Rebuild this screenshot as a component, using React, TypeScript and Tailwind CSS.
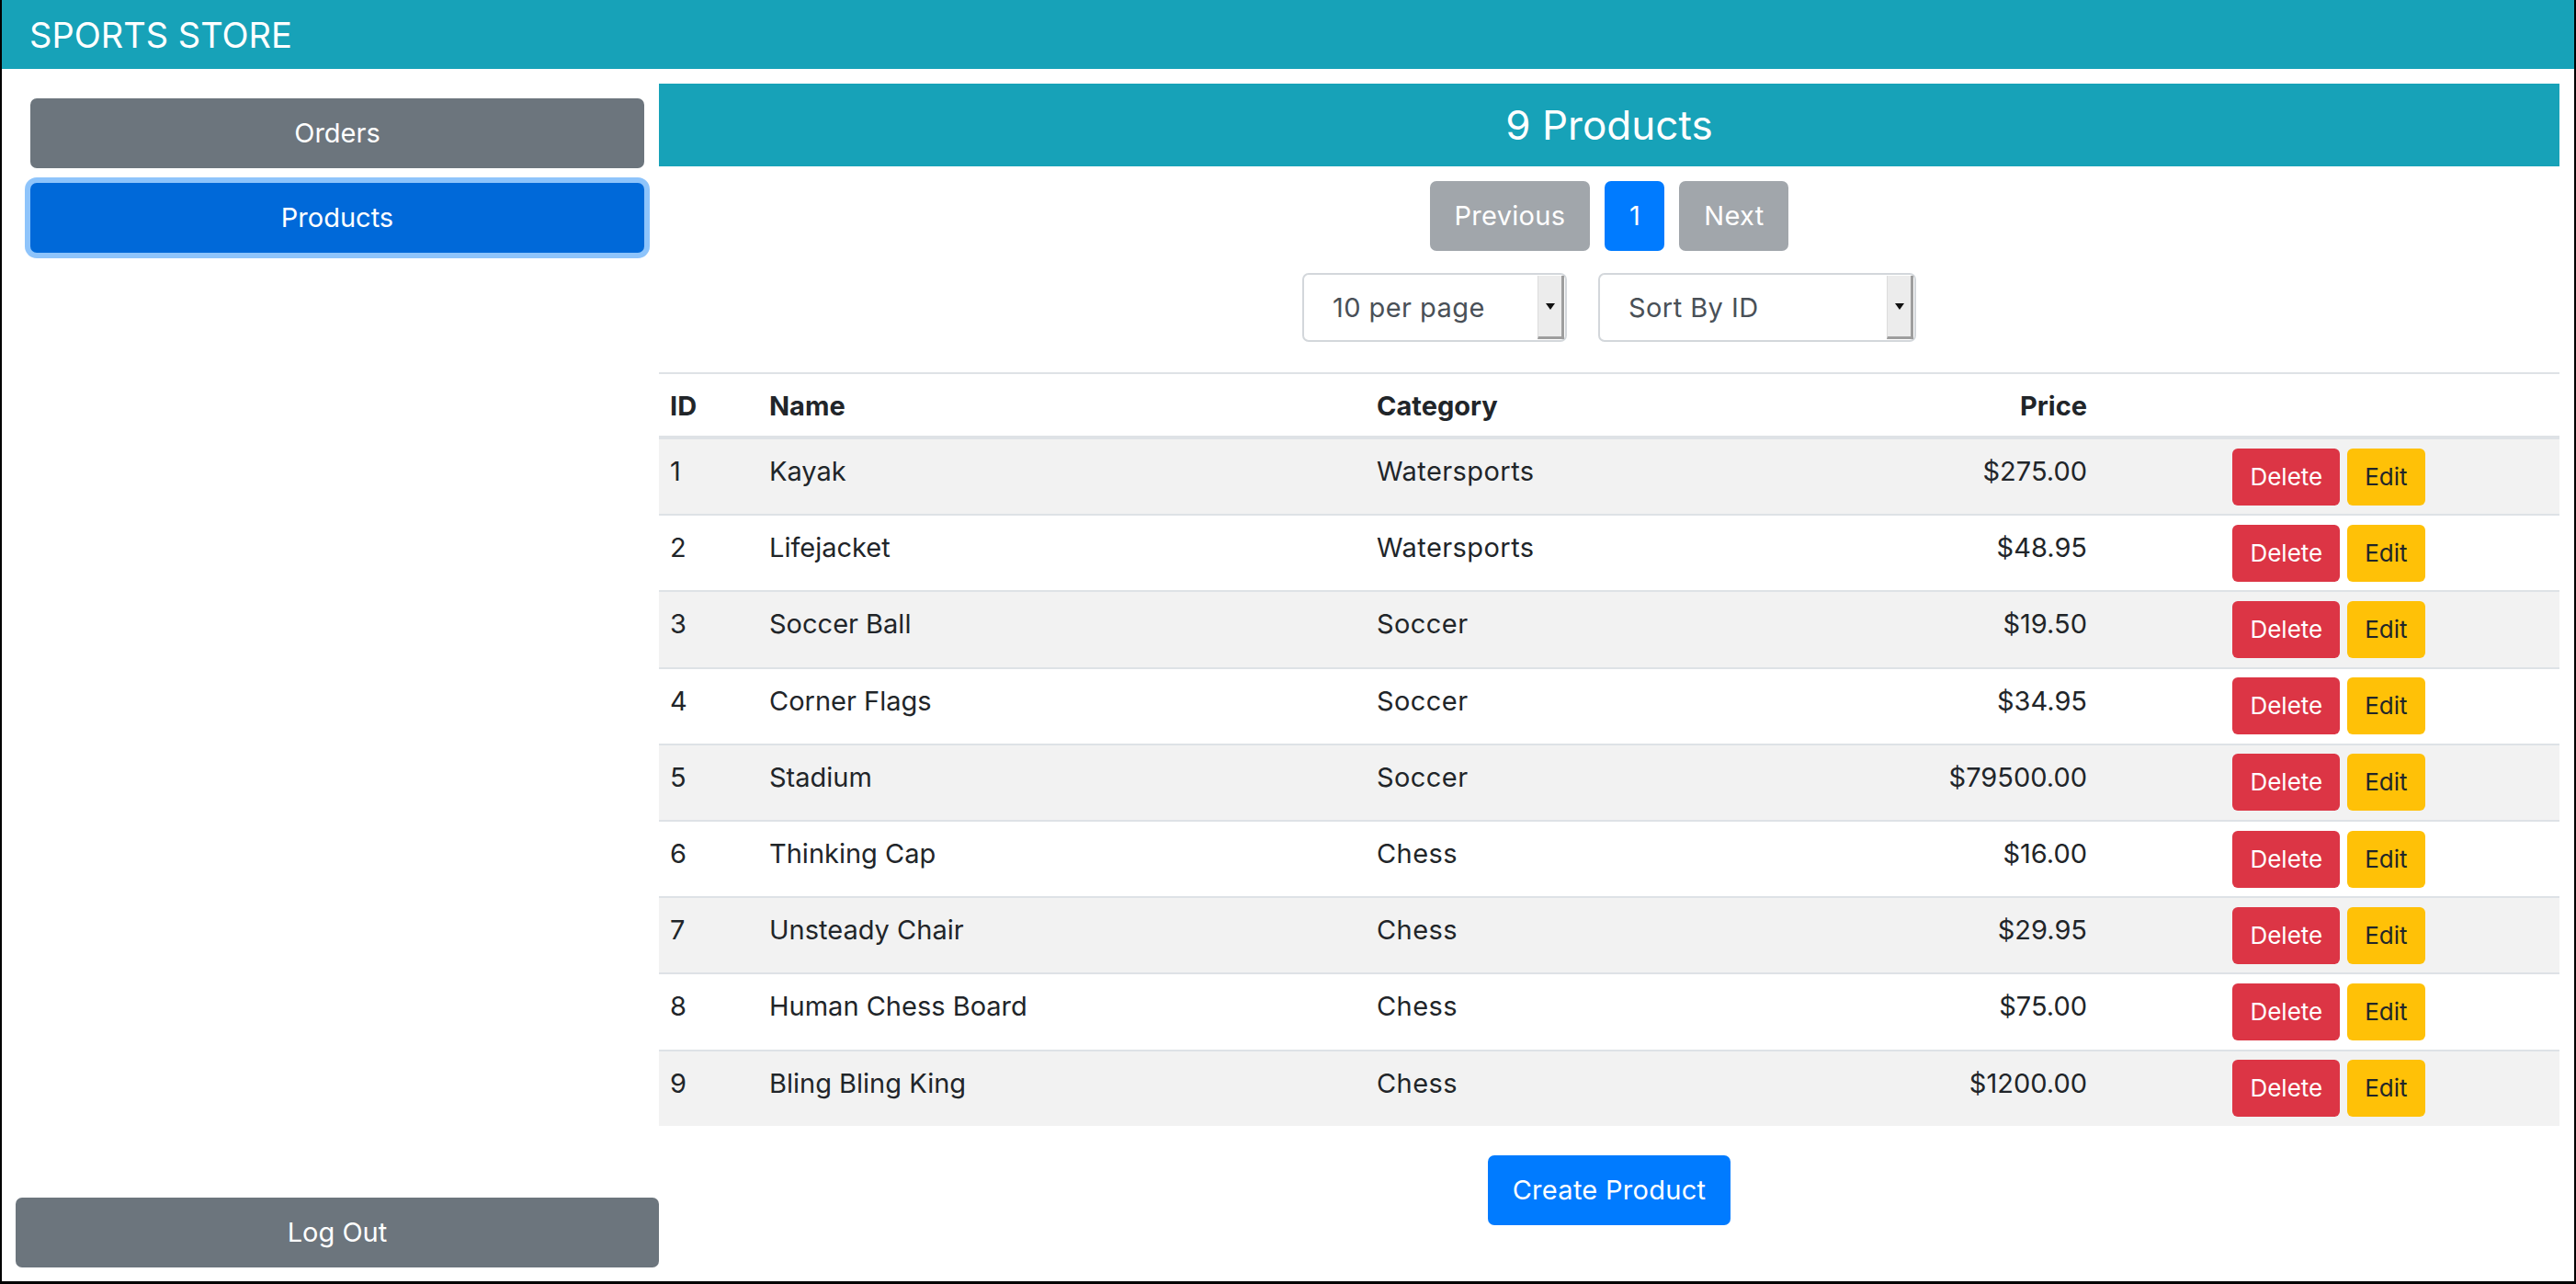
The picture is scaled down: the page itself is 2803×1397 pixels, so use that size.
import React from "react";

const products: [number, string, string, string][] = [
  [1, "Kayak", "Watersports", "$275.00"],
  [2, "Lifejacket", "Watersports", "$48.95"],
  [3, "Soccer Ball", "Soccer", "$19.50"],
  [4, "Corner Flags", "Soccer", "$34.95"],
  [5, "Stadium", "Soccer", "$79500.00"],
  [6, "Thinking Cap", "Chess", "$16.00"],
  [7, "Unsteady Chair", "Chess", "$29.95"],
  [8, "Human Chess Board", "Chess", "$75.00"],
  [9, "Bling Bling King", "Chess", "$1200.00"],
];

function SelectBox({ label, width }: { label: string; width: string }) {
  return (
    <div
      className={`${width} h-[75px] relative flex items-center border-2 border-[#d3d7db] rounded-[7px] bg-white`}
    >
      <span className="pl-[31px] text-[29px] tracking-[0.015em] text-[#495057] leading-none">{label}</span>
      <div className="absolute right-[1px] top-[1px] bottom-[1px] w-[29px] bg-[#ececec] border-l border-l-[#dcdcdc] border-r-[3px] border-r-[#9e9e9e] border-b-[3px] border-b-[#9e9e9e] flex items-center justify-center">
        <svg width="10" height="7" viewBox="0 0 10 7">
          <polygon points="0,0 10,0 5,7" fill="#111" />
        </svg>
      </div>
    </div>
  );
}

export default function App() {
  return (
    <div className="w-[2803px] h-[1397px] bg-white border-l-2 border-r-2 border-b-[3px] border-black flex flex-col font-['Inter',sans-serif] text-[#212529] overflow-hidden">
      <header className="h-[75px] shrink-0 bg-[#17a2b8] text-white text-[38px] flex items-center pl-[30px] leading-none">
        SPORTS STORE
      </header>
      <div className="flex flex-1 min-h-0">
        <aside className="w-[715px] shrink-0 flex flex-col justify-between pb-[15px]">
          <div className="pl-[31px] pr-[16px] pt-[32px] flex flex-col gap-[16px]">
            <button className="w-full h-[76px] rounded-[7px] bg-[#6c757d] text-white text-[29px]">
              Orders
            </button>
            <button className="w-full h-[76px] rounded-[7px] bg-[#0069d9] text-white text-[29px] ring-[6px] ring-[#8ec4fb]">
              Products
            </button>
          </div>
          <div className="pl-[15px]">
            <button className="w-full h-[76px] rounded-[7px] bg-[#6c757d] text-white text-[29px]">
              Log Out
            </button>
          </div>
        </aside>
        <main className="flex-1 pr-[16px] pt-[16px] flex flex-col">
          <div className="h-[90px] bg-[#17a2b8] text-white text-[44px] flex items-center justify-center leading-none">
            9 Products
          </div>
          <div className="mt-[16px] flex justify-center gap-[16px]">
            <button className="h-[76px] px-[27px] rounded-[7px] bg-[#a1a6ab] text-white text-[29px] tracking-[0.01em]">
              Previous
            </button>
            <button className="h-[76px] w-[65px] rounded-[7px] bg-[#007bff] text-white text-[29px]">
              1
            </button>
            <button className="h-[76px] px-[27px] rounded-[7px] bg-[#a1a6ab] text-white text-[29px] tracking-[0.01em]">
              Next
            </button>
          </div>
          <div className="mt-[24px] flex justify-center gap-[34px]">
            <SelectBox label="10 per page" width="w-[288px]" />
            <SelectBox label="Sort By ID" width="w-[346px]" />
          </div>
          <div className="mt-[33px] border-t-2 border-[#dee2e6] text-[29px] leading-[43px]">
            <div className="grid grid-cols-[108px_661px_400px_397px_502px] h-[69px] border-b-2 border-[#dee2e6] font-bold">
              <div className="pl-[12px] pt-[13px]">ID</div>
              <div className="pl-[12px] pt-[13px]">Name</div>
              <div className="pl-[12px] pt-[13px]">Category</div>
              <div className="pr-[12px] pt-[13px] text-right">Price</div>
              <div />
            </div>
            {products.map(([id, name, cat, price], i) => (
              <div
                key={id}
                className={`grid grid-cols-[108px_661px_400px_397px_502px] h-[83.2px] border-t-2 border-[#dee2e6] ${
                  i % 2 === 0 ? "bg-[#f2f2f2]" : "bg-white"
                }`}
              >
                <div className="pl-[12px] pt-[13px]">{id}</div>
                <div className="pl-[12px] pt-[13px]">{name}</div>
                <div className="pl-[12px] pt-[13px] tracking-[0.015em]">{cat}</div>
                <div className="pr-[12px] pt-[13px] text-right">{price}</div>
                <div className="flex items-center justify-center gap-[8px]">
                  <button className="h-[62px] px-[19px] rounded-[6px] bg-[#dc3545] text-white text-[26px] leading-none">
                    Delete
                  </button>
                  <button className="h-[62px] px-[19px] rounded-[6px] bg-[#ffc107] text-[#212529] text-[26px] leading-none">
                    Edit
                  </button>
                </div>
              </div>
            ))}
          </div>
          <div className="mt-[32px] flex justify-center">
            <button className="h-[76px] px-[27px] rounded-[7px] bg-[#007bff] text-white text-[29px] tracking-[0.01em]">
              Create Product
            </button>
          </div>
        </main>
      </div>
    </div>
  );
}
